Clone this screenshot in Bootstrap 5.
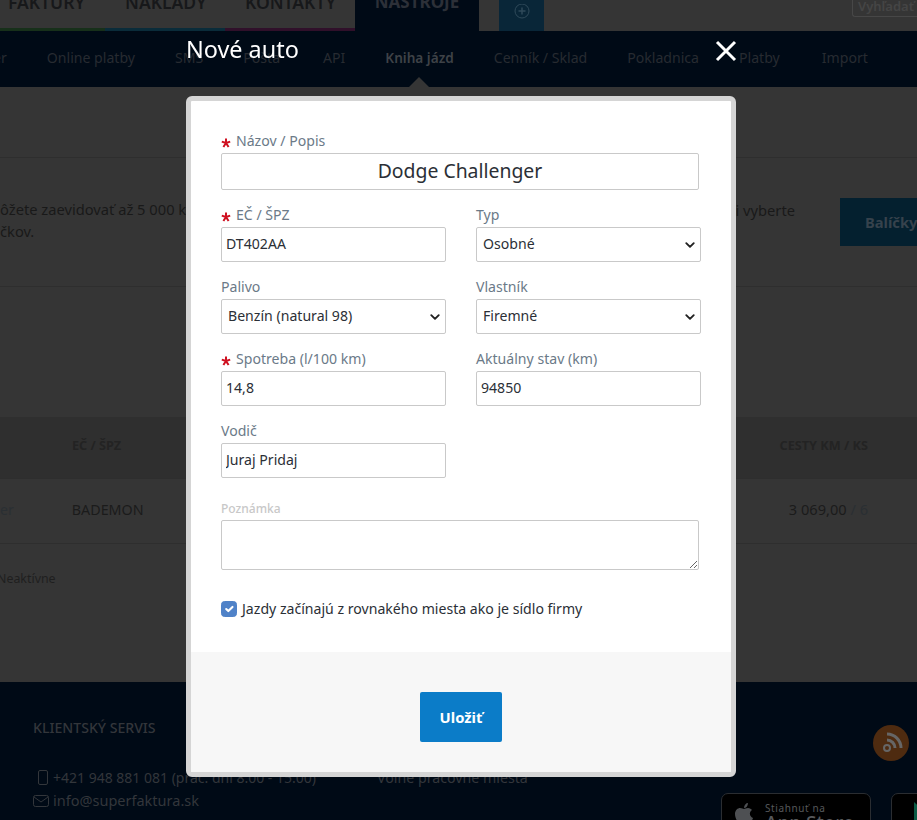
<!DOCTYPE html>
<html lang="sk"><head><meta charset="utf-8"><title>Nové auto</title>
<link href="https://cdn.jsdelivr.net/npm/bootstrap@5.3.0/dist/css/bootstrap.min.css" rel="stylesheet">
<style>
html,body{height:820px;overflow:hidden}
body{background:#353535;font-family:"Noto Sans","Open Sans",sans-serif;font-size:14.1px;color:#1c1c1c}
.page{width:917px;height:820px;overflow:hidden}
.topbar{height:31px;overflow:hidden}
.tabs{height:31px;font-size:17.5px;font-weight:600;line-height:14px;color:#17181a}
.tabs>div>span{display:block;margin-top:-5px}
.tab-a{width:125px;padding-left:8px}
.tab-b{width:120px}
.tab-c{width:110px}
.tab-d{width:124px;background:#000a16;text-align:center;color:#2c3038;font-weight:700;font-size:17px}
.tab-plus{width:45px;margin-left:20px;background:#092638;height:31px}
.strip{height:3px;width:355px;margin-top:-3px;background:linear-gradient(90deg,#17301a 0 105px,#0a2c3a 105px 225px,#30102a 225px 355px)}
.searchy{margin-left:auto;width:65px;height:17px;border:1px solid #474747;border-top:0;border-right:0;border-radius:0 0 0 3px;padding-left:5px;font-size:13px;line-height:13px;color:#454545;white-space:nowrap;overflow:hidden}
.subnav{height:56px;background:#000a16;color:#272b31;white-space:nowrap;overflow:hidden;padding-top:16px;position:relative;column-gap:40px}
.subnav span{flex:none}
.subnav .nav-first{margin-left:-7px}
.subnav .nav-api{margin-left:3px}
.subnav .cur{font-weight:600;font-size:13.6px;color:#3e4247;line-height:21px}
.subnav .nav-last{margin-left:2px}
.arrow{position:absolute;left:409px;bottom:0;width:0;height:0;border:10px solid transparent;border-bottom-color:#353535;border-top:0}
.promo{height:130px;margin-top:70px;border-top:1px solid #2e2e2e;border-bottom:1px solid #2e2e2e;line-height:22px;color:#191919;white-space:nowrap;overflow:hidden;font-size:14.7px}
.promo-l{padding-bottom:5px}
.promo-r{margin-bottom:25px;margin-right:45px}
.balicky{width:77px;height:48px;background:#04202f;color:#36424c;font-weight:700;line-height:48px;padding-left:25px;flex:none;overflow:hidden}
.thead{height:61px;margin-top:130px;background:#2f2f2f;font-size:12.7px;font-weight:700;color:#232323;padding-bottom:3px}
.trow{height:66px;border-top:1px solid #2e2e2e;border-bottom:1px solid #2e2e2e;color:#1b1b1b;padding-bottom:2px}
.trow-val{margin-right:49px;font-size:14.6px}
.trow-car{margin-left:58px;font-size:14.3px}
.mut{color:#2a2f33}
.neak{margin-top:26px;font-size:12.4px;color:#1f1f1f;height:112px;margin-left:-3px}
.ft{height:138px;background:#000a16;color:#33363b;position:relative;font-size:14.5px;line-height:23px}
.ft-head{padding:36px 0 0 33px;line-height:20px;font-size:14.1px;font-weight:500;text-transform:uppercase}
.ft-rows{padding-left:37px;margin-top:28px}
.ft-left{width:340px;flex:none}
.ft-phone{font-size:14px}
.ft-jobs{font-size:14.2px}
.ft-mail{margin-left:-4px}
.rss{width:36px;height:36px;border-radius:50%;background:#4e2b10;flex:none;position:absolute;left:873px;top:43px}
.store{width:150px;height:40px;border:1px solid #2a2d31;border-radius:7px;background:#000;flex:none;overflow:hidden;position:absolute;left:721px;top:111px;padding-left:11px;gap:10px}
.store2{left:891px}
.store small{display:block;font-size:10px;line-height:12px;letter-spacing:.6px;margin-top:8px;color:#56585b}
.store b{display:block;font-size:19px;line-height:18px;font-weight:500;color:#56585b}
.overlay{position:fixed;left:186px;top:0;width:550px;z-index:5}
.mtitle{height:96px;padding-top:32px;color:#fff;font-size:23.4px;line-height:34px;position:relative}
.mclose{position:absolute;right:-1px;top:40px;width:22px;height:22px}
.mbox{border:5px solid #d5d5d5;border-radius:6px;background:#fff;height:681px;overflow:hidden}
.mbody{height:551px;padding:30px 30px 0}
.mfoot{height:120px;background:#f7f7f7;padding-top:40px}
.mform{column-gap:30px;width:480px}
.coln{width:225px;flex:none;padding:0}
.fl{display:block;height:22px;line-height:20px;color:#6b7a88;margin:0}
.fl svg{margin-right:5px;vertical-align:-2px}
.fi{height:35px;border:1px solid #c9c9c9;border-radius:2px;padding:0 4px 2px;font-size:14.1px;color:#2b2f36;box-shadow:none;margin-bottom:15px}
select.fi{padding:0 24px 2px 6px;background-position:right 4px center;background-size:12px 10px;background-image:url("data:image/svg+xml,%3csvg xmlns='http://www.w3.org/2000/svg' viewBox='0 0 16 16'%3e%3cpath fill='none' stroke='%23222' stroke-linecap='round' stroke-linejoin='round' stroke-width='3' d='m2 5 6 6 6-6'/%3e%3c/svg%3e")}
.fname{height:37px;width:478px;font-size:19.4px;text-align:center}
.fnote{width:478px;height:50px;margin:0;padding:6px}
.fl-note{font-size:12px;font-weight:500;color:#c8c8c8;margin-top:5px;line-height:22px}
.chk{margin-top:31px;display:flex;align-items:center;gap:5px;color:#2b2f36;line-height:16px}
.chkbox{width:16px;height:16px;margin:0;flex:none;background-color:#4f82c8!important;border-color:#4f82c8!important;border-radius:3px}
.savebtn{width:82px;height:50px;background:#0b7cc8;border:0;border-radius:2px;color:#fff;font-weight:700;font-size:14.8px}
.gplay{margin-left:11px}
</style></head><body>
<div class="page">
  <div class="topbar">
    <div class="d-flex tabs">
      <div class="tab-a"><span>FAKTÚRY</span></div><div class="tab-b"><span>NÁKLADY</span></div><div class="tab-c"><span>KONTAKTY</span></div>
      <div class="tab-d"><span>NÁSTROJE</span></div>
      <div class="tab-plus d-flex justify-content-center pt-1"><svg width="18" height="18" viewBox="0 0 18 18"><circle cx="9" cy="7" r="7" fill="none" stroke="#2f4a5a"/><path d="M9 3.5v7M5.5 7h7" stroke="#2f4a5a" stroke-width="1.5"/></svg></div>
      <div class="searchy">Vyhľadať</div>
    </div>
    <div class="strip"></div>
  </div>
  <div class="subnav d-flex">
    <span class="nav-first">er</span><span>Online platby</span>
    <span>SMS</span><span>Pošta</span><span class="nav-api">API</span>
    <span class="cur">Kniha jázd</span><span>Cenník / Sklad</span><span>Pokladnica</span><span>Platby</span><span class="nav-last">Import</span>
    <div class="arrow"></div>
  </div>
  <div class="promo d-flex align-items-center">
    <div class="flex-grow-1 overflow-hidden promo-l">ôžete zaevidovať až 5 000 km<br>čkov.</div>
    <div class="promo-r">i vyberte</div>
    <div class="balicky">Balíčky</div>
  </div>
  <div class="thead d-flex align-items-center"><span style="margin-left:72px">EČ / ŠPZ</span><span class="ms-auto" style="margin-right:49px">CESTY KM / KS</span></div>
  <div class="trow d-flex align-items-center"><span class="mut">er</span><span class="trow-car">BADEMON</span><span class="ms-auto trow-val">3 069,00 <span class="mut">/ 6</span></span></div>
  <div class="neak">Neaktívne</div>
  <div class="ft">
    <div class="ft-head">Klientský servis</div>
    <div class="d-flex ft-rows">
      <div class="ft-left">
        <div class="d-flex align-items-center gap-1"><svg width="12" height="15" viewBox="0 0 12 15"><rect x="1.5" y=".5" width="9" height="14" rx="1.5" fill="none" stroke="#33363b"/></svg><span class="ft-phone">+421 948 881 081 (prac. dni 8:00 - 15:00)</span></div>
        <div class="d-flex align-items-center gap-1 ft-mail"><svg width="16" height="12" viewBox="0 0 16 12"><rect x=".5" y=".5" width="15" height="11" rx="2" fill="none" stroke="#33363b"/><path d="M1 2l7 5 7-5" fill="none" stroke="#33363b"/></svg><span>info@superfaktura.sk</span></div>
      </div>
      <div class="ft-jobs">Voľné pracovné miesta</div>
    </div>
    <div class="rss d-flex align-items-center justify-content-center"><svg width="24" height="24" viewBox="0 0 24 24" fill="none" stroke="#666" stroke-width="3"><path d="M8 9a8 8 0 0 1 8 8M8 3a14 14 0 0 1 14 14"/><circle cx="8" cy="17" r="3" stroke-width="2"/></svg></div>
    <div class="store d-flex"><svg width="22" height="26" viewBox="0 0 22 26" class="mt-2"><path fill="#4e5053" d="M15 1c0 3-2 5-4 5 0-3 2-5 4-5zM11 7c1 0 2-1 4-1 2 0 3 1 4 2-3 2-3 6 1 8-1 3-3 6-5 6-1 0-2-1-3-1s-2 1-4 1c-3 0-6-6-6-10 0-4 3-6 5-6 2 0 3 1 4 1z"/></svg><div><small>Stiahnuť na</small><b>App Store</b></div></div>
    <div class="store store2"><svg class="gplay" width="15" height="40" viewBox="0 0 15 40"><path d="M0 8l13 12L0 32z" fill="#0b5a45"/></svg></div>
  </div>
</div>
<div class="overlay">
  <div class="mtitle">Nové auto
    <svg class="mclose" viewBox="0 0 22 22"><path d="M2 2l18 18M20 2L2 20" stroke="#fff" stroke-width="3"/></svg>
  </div>
  <div class="mbox">
    <div class="mbody">
      <form class="row gx-0 mform">
        <div class="col-12"><label class="fl"><svg width="10" height="10" viewBox="0 0 10 10"><path d="M5 5V.5M5 5 .8 3.6M5 5 9.2 3.6M5 5 2.4 9M5 5 7.6 9" stroke="#cf1020" stroke-width="2"/></svg>Názov / Popis</label><input class="form-control fi fname" value="Dodge Challenger"></div>
        <div class="coln"><label class="fl"><svg width="10" height="10" viewBox="0 0 10 10"><path d="M5 5V.5M5 5 .8 3.6M5 5 9.2 3.6M5 5 2.4 9M5 5 7.6 9" stroke="#cf1020" stroke-width="2"/></svg>EČ / ŠPZ</label><input class="form-control fi" value="DT402AA"></div>
        <div class="coln"><label class="fl">Typ</label><select class="form-select fi"><option>Osobné</option></select></div>
        <div class="coln"><label class="fl">Palivo</label><select class="form-select fi"><option>Benzín (natural 98)</option></select></div>
        <div class="coln"><label class="fl">Vlastník</label><select class="form-select fi"><option>Firemné</option></select></div>
        <div class="coln"><label class="fl"><svg width="10" height="10" viewBox="0 0 10 10"><path d="M5 5V.5M5 5 .8 3.6M5 5 9.2 3.6M5 5 2.4 9M5 5 7.6 9" stroke="#cf1020" stroke-width="2"/></svg>Spotreba (l/100 km)</label><input class="form-control fi" value="14,8"></div>
        <div class="coln"><label class="fl">Aktuálny stav (km)</label><input class="form-control fi" value="94850"></div>
        <div class="coln"><label class="fl">Vodič</label><input class="form-control fi" value="Juraj Pridaj"></div>
        <div class="col-12"><label class="fl fl-note">Poznámka</label><textarea class="form-control fi fnote"></textarea></div>
        <div class="col-12"><div class="chk"><input class="form-check-input chkbox" type="checkbox" checked><span>Jazdy začínajú z rovnakého miesta ako je sídlo firmy</span></div></div>
      </form>
    </div>
    <div class="mfoot d-flex justify-content-center"><button class="savebtn" type="button">Uložiť</button></div>
  </div>
</div>
<script src="https://cdn.jsdelivr.net/npm/bootstrap@5.3.0/dist/js/bootstrap.bundle.min.js"></script>
</body></html>
